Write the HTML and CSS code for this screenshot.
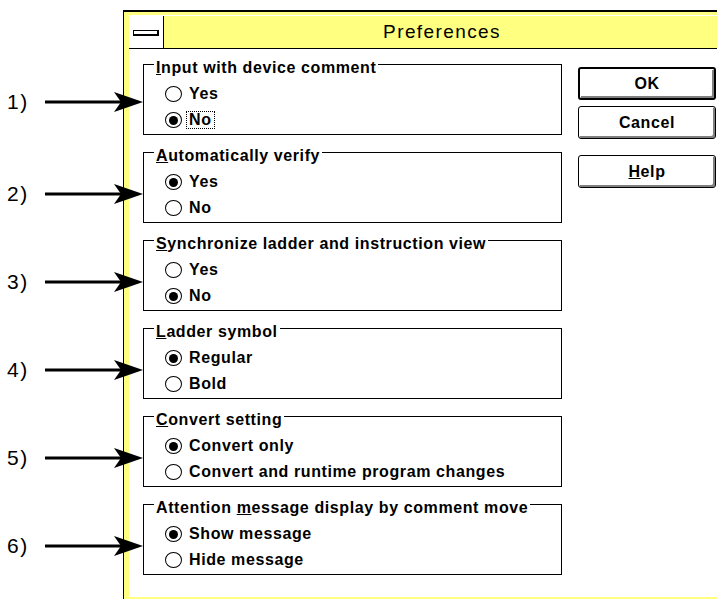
FILE: index.html
```html
<!DOCTYPE html>
<html>
<head>
<meta charset="utf-8">
<link rel="stylesheet" href="styles.css">
</head>
<body>
<div class="window">
  <div class="titlebar">
    <div class="sysmenu"><span class="dash"></span></div>
    <div class="title">Preferences</div>
  </div>
  <div class="client">
    <div class="groups">
      <div class="group">
        <div class="group-title"><u>I</u>nput with device comment</div>
        <div class="opt"><span class="radio"></span><span class="lbl">Yes</span></div>
        <div class="opt"><span class="radio on"></span><span class="lbl focus">No</span></div>
        <div class="callout first"><span class="num">1)</span><svg class="arrow" width="99" height="22" viewBox="0 0 99 22"><line x1="1" y1="11" x2="80" y2="11" stroke="#000" stroke-width="3"/><polygon points="99,11 70,1 77,11 70,21" fill="#000"/></svg></div>
      </div>
      <div class="group">
        <div class="group-title"><u>A</u>utomatically verify</div>
        <div class="opt"><span class="radio on"></span><span class="lbl">Yes</span></div>
        <div class="opt"><span class="radio"></span><span class="lbl">No</span></div>
        <div class="callout"><span class="num">2)</span><svg class="arrow" width="99" height="22" viewBox="0 0 99 22"><line x1="1" y1="11" x2="80" y2="11" stroke="#000" stroke-width="3"/><polygon points="99,11 70,1 77,11 70,21" fill="#000"/></svg></div>
      </div>
      <div class="group">
        <div class="group-title"><u>S</u>ynchronize ladder and instruction view</div>
        <div class="opt"><span class="radio"></span><span class="lbl">Yes</span></div>
        <div class="opt"><span class="radio on"></span><span class="lbl">No</span></div>
        <div class="callout"><span class="num">3)</span><svg class="arrow" width="99" height="22" viewBox="0 0 99 22"><line x1="1" y1="11" x2="80" y2="11" stroke="#000" stroke-width="3"/><polygon points="99,11 70,1 77,11 70,21" fill="#000"/></svg></div>
      </div>
      <div class="group">
        <div class="group-title"><u>L</u>adder symbol</div>
        <div class="opt"><span class="radio on"></span><span class="lbl">Regular</span></div>
        <div class="opt"><span class="radio"></span><span class="lbl">Bold</span></div>
        <div class="callout"><span class="num">4)</span><svg class="arrow" width="99" height="22" viewBox="0 0 99 22"><line x1="1" y1="11" x2="80" y2="11" stroke="#000" stroke-width="3"/><polygon points="99,11 70,1 77,11 70,21" fill="#000"/></svg></div>
      </div>
      <div class="group">
        <div class="group-title"><u>C</u>onvert setting</div>
        <div class="opt"><span class="radio on"></span><span class="lbl">Convert only</span></div>
        <div class="opt"><span class="radio"></span><span class="lbl">Convert and runtime program changes</span></div>
        <div class="callout"><span class="num">5)</span><svg class="arrow" width="99" height="22" viewBox="0 0 99 22"><line x1="1" y1="11" x2="80" y2="11" stroke="#000" stroke-width="3"/><polygon points="99,11 70,1 77,11 70,21" fill="#000"/></svg></div>
      </div>
      <div class="group">
        <div class="group-title">Attention <u>m</u>essage display by comment move</div>
        <div class="opt"><span class="radio on"></span><span class="lbl">Show message</span></div>
        <div class="opt"><span class="radio"></span><span class="lbl">Hide message</span></div>
        <div class="callout"><span class="num">6)</span><svg class="arrow" width="99" height="22" viewBox="0 0 99 22"><line x1="1" y1="11" x2="80" y2="11" stroke="#000" stroke-width="3"/><polygon points="99,11 70,1 77,11 70,21" fill="#000"/></svg></div>
      </div>
    </div>
    <div class="buttons">
      <div class="btn default">OK</div>
      <div class="btn">Cancel</div>
      <div class="btn help"><u>H</u>elp</div>
    </div>
  </div>
</div>
</body>
</html>
```

FILE: styles.css
```css
html, body {
  margin: 0;
  padding: 0;
  background: #fff;
  overflow: hidden;
}
body {
  width: 717px;
  height: 599px;
  font-family: "Liberation Sans", Arial, sans-serif;
  font-weight: bold;
  font-size: 16px;
  letter-spacing: 0.6px;
  color: #000;
}
.window {
  margin: 10px 0 0 123px;
  width: 603px;
  box-sizing: border-box;
  border: 1px solid #000;
  border-top-width: 2px;
  border-bottom: none;
  background: #ffff80;
  padding: 3px 5px 5px 5px;
}
.titlebar {
  display: flex;
  height: 32px;
  border-top: 1px solid #fff;
  border-bottom: 1px solid #000;
  background: #ffff80;
}
.sysmenu {
  width: 34px;
  background: #fff;
  border-right: 1px solid #000;
  display: flex;
  align-items: center;
  justify-content: center;
}
.dash {
  display: block;
  width: 23px;
  height: 3px;
  background: #fff;
  border: 1px solid #000;
  border-right-width: 2px;
  border-bottom-width: 2px;
  margin-top: 1px;
}
.title {
  flex: 1;
  text-align: center;
  font-weight: normal;
  font-size: 19px;
  letter-spacing: 1.4px;
  line-height: 32px;
}
.client {
  display: flex;
  align-items: flex-start;
  background: #fff;
  height: 548px;
  padding: 15px 0 0 14px;
  box-sizing: border-box;
}
.groups {
  width: 419px;
}
.group {
  position: relative;
  border: 1px solid #000;
  padding: 0 0 1px 21px;
  margin-bottom: 17px;
}
.group-title {
  display: table;
  margin: -5px 0 5px -11px;
  padding: 0 2px;
  background: #fff;
  line-height: 16px;
  white-space: nowrap;
}
.opt {
  display: flex;
  align-items: center;
  height: 26px;
}
.radio {
  width: 17px;
  height: 16px;
  box-sizing: border-box;
  border: 1px solid #000;
  border-radius: 50%;
  display: flex;
  align-items: center;
  justify-content: center;
  margin-right: 4px;
  flex: none;
}
.radio.on::after {
  content: "";
  width: 9px;
  height: 9px;
  border-radius: 50%;
  background: #000;
}
.lbl {
  padding: 0 2px;
  border: 1px dotted transparent;
  line-height: 16px;
}
.lbl.focus {
  border-color: #000;
}
.callout {
  position: absolute;
  left: -144px;
  top: 30px;
  display: flex;
  align-items: center;
  font-weight: normal;
  font-size: 21px;
  letter-spacing: 1.5px;
}
.callout.first {
  top: 26px;
}
.num {
  width: 44px;
  box-sizing: border-box;
  padding-left: 7px;
  line-height: 22px;
}
.arrow {
  display: block;
}
.buttons {
  margin: 3px 0 0 16px;
  width: 138px;
  display: flex;
  flex-direction: column;
}
.btn {
  height: 33px;
  box-sizing: border-box;
  border: 1px solid #000;
  border-radius: 3px;
  background: #fff;
  box-shadow: inset 1px 1px 0 #fff, inset -2px -2px 0 #808080;
  display: flex;
  align-items: center;
  justify-content: center;
  margin-bottom: 6px;
}
.btn.default {
  border-width: 2px;
}
.btn.help {
  margin-top: 10px;
}
```
